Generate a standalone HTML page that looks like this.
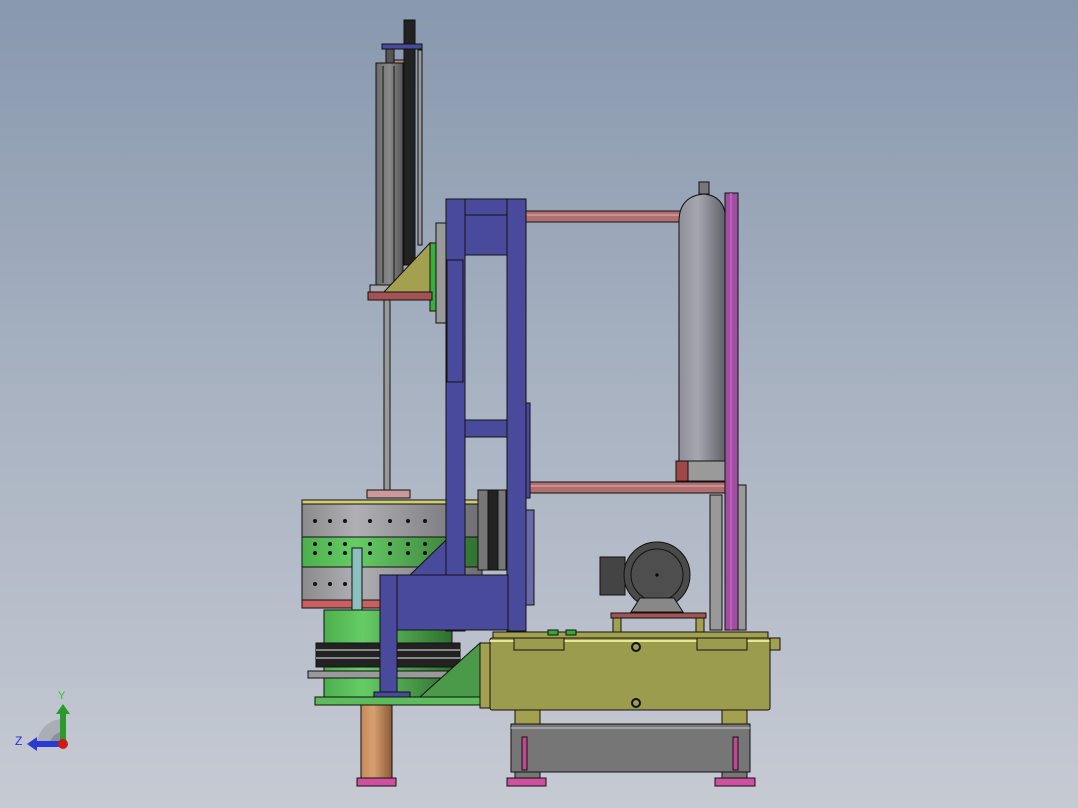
<!DOCTYPE html>
<html><head><meta charset="utf-8"><style>
html,body{margin:0;padding:0;width:1078px;height:808px;overflow:hidden}
body{background:linear-gradient(#8898ae 0%,#a9b3c2 50%,#c6cad3 100%)}
svg{position:absolute;left:0;top:0}
</style></head><body>
<svg width="1078" height="808" viewBox="0 0 1078 808" xmlns="http://www.w3.org/2000/svg" stroke="#111" stroke-width="1">
<defs>
<linearGradient id="tank" x1="0" x2="1"><stop offset="0" stop-color="#8e8f98"/><stop offset=".4" stop-color="#a6a7b0"/><stop offset="1" stop-color="#5e5f66"/></linearGradient>
<linearGradient id="drum" x1="0" x2="1"><stop offset="0" stop-color="#8a8a8c"/><stop offset=".3" stop-color="#b0b0b4"/><stop offset="1" stop-color="#6e6e72"/></linearGradient>
<linearGradient id="grn" x1="0" x2="1"><stop offset="0" stop-color="#4caf4c"/><stop offset=".3" stop-color="#66cc66"/><stop offset="1" stop-color="#2f6e2f"/></linearGradient>
<linearGradient id="cop" x1="0" x2="1"><stop offset="0" stop-color="#c48a5a"/><stop offset=".4" stop-color="#d8a070"/><stop offset="1" stop-color="#8a5a38"/></linearGradient>
<linearGradient id="cyl" x1="0" x2="1"><stop offset="0" stop-color="#6a6a6a"/><stop offset=".5" stop-color="#8a8a8a"/><stop offset="1" stop-color="#555"/></linearGradient>
</defs>
<!-- actuator -->
<rect x="404" y="20" width="11" height="245" fill="#222"/>
<rect x="418" y="50" width="4" height="195" fill="#999"/>
<rect x="382" y="44" width="40" height="5" fill="#4a4a9a"/>
<rect x="386" y="49" width="8" height="14" fill="#555"/>
<rect x="394" y="60" width="10" height="4" fill="#c08080"/>
<rect x="376" y="63" width="27" height="222" fill="url(#cyl)"/>
<line x1="383" y1="66" x2="383" y2="283"/><line x1="394" y1="66" x2="394" y2="283"/>
<rect x="370" y="285" width="20" height="8" fill="#aaa"/>
<polygon points="384,292 430,243 430,292" fill="#a3a150"/>
<rect x="430" y="243" width="6" height="68" fill="#3cae3c"/>
<rect x="436" y="223" width="10" height="100" fill="#9a9a9a"/>
<rect x="368" y="292" width="64" height="8" fill="#a35353"/>
<rect x="384" y="300" width="6" height="190" fill="#999"/>
<rect x="367" y="490" width="43" height="8" fill="#c99"/>
<!-- rails -->
<rect x="526" y="211" width="200" height="11" fill="#b07070"/>
<line x1="526" y1="215" x2="726" y2="215" stroke="#e0b0b0"/>
<rect x="526" y="482" width="200" height="11" fill="#b07070"/>
<line x1="526" y1="486" x2="726" y2="486" stroke="#e0b0b0"/>
<!-- tank -->
<rect x="699" y="182" width="10" height="12" fill="#777"/>
<path d="M679,220 Q680,196 704,194 Q725,196 726,220 L726,481 L679,481 Z" fill="url(#tank)"/>
<rect x="676" y="461" width="50" height="20" fill="#9a9a9a"/>
<rect x="676" y="461" width="12" height="20" fill="#a04848"/>
<!-- right verticals -->
<rect x="710" y="495" width="12" height="135" fill="#999"/>
<rect x="738" y="485" width="8" height="145" fill="#999"/>
<rect x="725" y="193" width="13" height="437" fill="#a04ea0"/>
<line x1="731" y1="193" x2="731" y2="630" stroke="#e070e0"/>
<!-- drum -->
<rect x="302" y="500" width="180" height="4" fill="#d0d070"/>
<rect x="302" y="504" width="180" height="33" fill="url(#drum)"/>
<rect x="302" y="537" width="180" height="30" fill="url(#grn)"/>
<rect x="302" y="567" width="180" height="33" fill="url(#drum)"/>
<rect x="302" y="600" width="180" height="8" fill="#c86060"/>
<g fill="#111" stroke="none">
<circle cx="315" cy="521" r="2"/><circle cx="330" cy="521" r="2"/><circle cx="345" cy="521" r="2"/><circle cx="370" cy="521" r="2"/><circle cx="390" cy="521" r="2"/><circle cx="408" cy="521" r="2"/><circle cx="425" cy="521" r="2"/>
<circle cx="315" cy="544" r="2"/><circle cx="330" cy="544" r="2"/><circle cx="345" cy="544" r="2"/><circle cx="370" cy="544" r="2"/><circle cx="390" cy="544" r="2"/><circle cx="408" cy="544" r="2"/><circle cx="425" cy="544" r="2"/>
<circle cx="315" cy="553" r="2"/><circle cx="330" cy="553" r="2"/><circle cx="345" cy="553" r="2"/><circle cx="370" cy="553" r="2"/><circle cx="390" cy="553" r="2"/><circle cx="408" cy="553" r="2"/><circle cx="425" cy="553" r="2"/>
<circle cx="315" cy="584" r="2"/><circle cx="330" cy="584" r="2"/><circle cx="345" cy="584" r="2"/>
</g>
<rect x="352" y="548" width="10" height="66" fill="#8cc0c0"/>
<!-- lower green column -->
<rect x="324" y="610" width="128" height="87" fill="url(#grn)"/>
<rect x="316" y="643" width="144" height="24" fill="#222"/>
<line x1="316" y1="650" x2="460" y2="650" stroke="#888" stroke-width="2"/>
<line x1="316" y1="658" x2="460" y2="658" stroke="#888" stroke-width="2"/>
<rect x="308" y="671" width="152" height="7" fill="#9a9a9a"/>
<rect x="361" y="705" width="31" height="75" fill="url(#cop)"/>
<rect x="357" y="778" width="39" height="8" fill="#d050a0"/>
<!-- base plate & gusset -->
<polygon points="420,697 480,643 480,697" fill="#4a9a4a"/>
<rect x="315" y="697" width="165" height="8" fill="#5cbc5c"/>
<!-- blue frame -->
<g fill="#4a4a9c">
<rect x="446" y="199" width="80" height="16"/>
<rect x="446" y="199" width="19" height="432"/>
<rect x="507" y="199" width="19" height="432"/>
<rect x="465" y="215" width="42" height="40"/>
<rect x="447" y="260" width="16" height="122"/>
<rect x="465" y="420" width="42" height="17"/>
<rect x="526" y="403" width="4" height="95"/>
<rect x="526" y="510" width="8" height="95" fill="#6a6aa8"/>
<polygon points="410,575 446,540 446,575"/>
<rect x="380" y="575" width="128" height="55"/>
<rect x="380" y="575" width="17" height="120"/>
<rect x="374" y="692" width="36" height="5"/>
</g>
<rect x="478" y="490" width="28" height="80" fill="#777"/>
<rect x="488" y="490" width="10" height="80" fill="#222"/>
<!-- motor -->
<rect x="611" y="613" width="95" height="5" fill="#a35353"/>
<rect x="613" y="618" width="8" height="14" fill="#a3a150"/>
<rect x="696" y="618" width="8" height="14" fill="#a3a150"/>
<rect x="600" y="557" width="25" height="38" fill="#444"/>
<circle cx="657" cy="575" r="33" fill="#4a4a4a"/>
<circle cx="657" cy="575" r="26" fill="#4e4e4e"/>
<circle cx="657" cy="575" r="1.2" fill="#000"/>
<polygon points="631,612 640,598 674,598 683,612" fill="#888"/>
<!-- yellow box -->
<rect x="493" y="632" width="275" height="8" fill="#a3a150"/>
<rect x="480" y="643" width="10" height="65" fill="#a3a150"/>
<rect x="490" y="638" width="280" height="72" rx="2" fill="#9c9c4e"/>
<line x1="490" y1="641" x2="770" y2="641" stroke="#e8e890" stroke-width="2"/>
<rect x="514" y="638" width="50" height="12" fill="#9c9c4e"/>
<rect x="697" y="638" width="50" height="12" fill="#9c9c4e"/>
<rect x="770" y="638" width="10" height="12" fill="#a3a150"/>
<circle cx="636" cy="647" r="4" fill="none" stroke-width="2"/>
<circle cx="636" cy="703" r="4" fill="none" stroke-width="2"/>
<rect x="548" y="630" width="10" height="5" fill="#3a3"/><rect x="566" y="630" width="10" height="5" fill="#3a3"/>
<!-- under frame -->
<rect x="515" y="710" width="25" height="14" fill="#a3a150"/>
<rect x="722" y="710" width="25" height="14" fill="#a3a150"/>
<rect x="511" y="724" width="239" height="48" fill="#767676"/>
<line x1="511" y1="728" x2="750" y2="728" stroke="#ccc"/>
<rect x="522" y="737" width="5" height="33" fill="#c04890"/>
<rect x="733" y="737" width="5" height="33" fill="#c04890"/>
<rect x="515" y="772" width="25" height="6" fill="#777"/>
<rect x="722" y="772" width="25" height="6" fill="#777"/>
<rect x="507" y="778" width="39" height="8" fill="#d050a0"/>
<rect x="715" y="778" width="40" height="8" fill="#d050a0"/>
<!-- triad -->
<g stroke="none">
<path d="M37,745 A26,26 0 0 1 63,719 L63,745 Z" fill="#a9adb5"/>
<path d="M50,745 A13,13 0 0 1 63,732 L63,745 Z" fill="#8c9098"/>
<rect x="60" y="712" width="6" height="32" fill="#2a9a2a"/>
<polygon points="56,714 63,704 70,714" fill="#2a9a2a"/>
<rect x="36" y="741" width="26" height="6" fill="#2a3ad0"/>
<polygon points="37,737 27,744 37,751" fill="#2a3ad0"/>
<circle cx="63" cy="744" r="5" fill="#d01818"/>
</g>
<text x="58" y="699" font-family="Liberation Sans,sans-serif" font-size="11" fill="#20d020" stroke="none">Y</text>
<text x="15" y="745" font-family="Liberation Sans,sans-serif" font-size="12" fill="#2030e0" stroke="none">Z</text>
</svg>
</body></html>
